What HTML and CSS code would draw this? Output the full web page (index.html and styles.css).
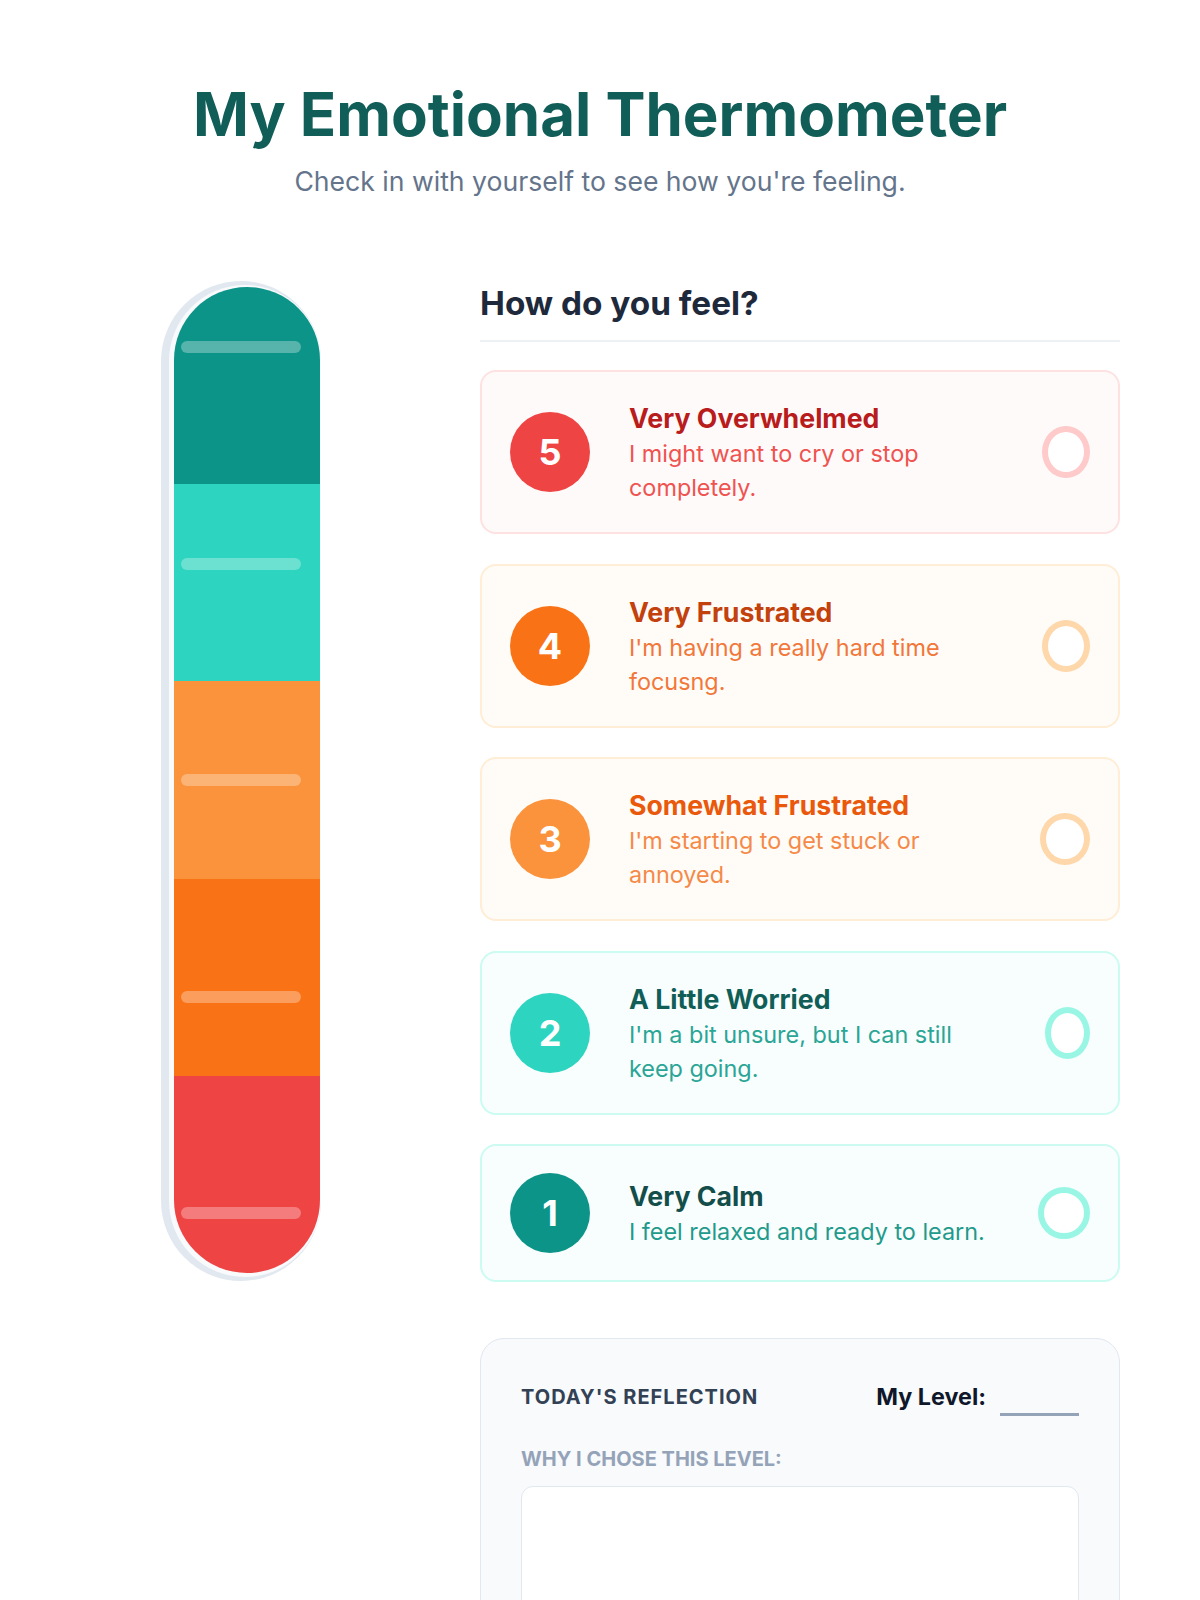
FILE: index.html
```html
<!DOCTYPE html>
<html lang="en">
<head>
<meta charset="utf-8">
<title>My Emotional Thermometer</title>
<link rel="stylesheet" href="styles.css">
</head>
<body>
<div class="page">
  <header class="header">
    <h1 class="title">My Emotional Thermometer</h1>
    <p class="subtitle">Check in with yourself to see how you're feeling.</p>
  </header>

  <div class="layout">
    <div class="thermo-col">
      <div class="tube">
        <div class="glass">
          <div class="fill">
            <div class="seg seg-5"></div>
            <div class="seg seg-4"></div>
            <div class="seg seg-3"></div>
            <div class="seg seg-2"></div>
            <div class="seg seg-1"></div>
          </div>
        </div>
        <div class="ticks">
          <span class="tick"></span>
          <span class="tick"></span>
          <span class="tick"></span>
          <span class="tick"></span>
          <span class="tick"></span>
        </div>
      </div>
    </div>

    <div class="feel-col">
      <h2 class="feel-heading">How do you feel?</h2>
      <div class="cards">
        <div class="card card-red">
          <div class="badge">5</div>
          <div class="card-text">
            <div class="card-title">Very Overwhelmed</div>
            <div class="card-desc">I might want to cry or stop completely.</div>
          </div>
          <div class="ring"></div>
        </div>
        <div class="card card-orange">
          <div class="badge">4</div>
          <div class="card-text">
            <div class="card-title">Very Frustrated</div>
            <div class="card-desc">I'm having a really hard time focusng.</div>
          </div>
          <div class="ring"></div>
        </div>
        <div class="card card-amber">
          <div class="badge">3</div>
          <div class="card-text">
            <div class="card-title">Somewhat Frustrated</div>
            <div class="card-desc">I'm starting to get stuck or annoyed.</div>
          </div>
          <div class="ring"></div>
        </div>
        <div class="card card-mint">
          <div class="badge">2</div>
          <div class="card-text">
            <div class="card-title">A Little Worried</div>
            <div class="card-desc">I'm a bit unsure, but I can still keep going.</div>
          </div>
          <div class="ring"></div>
        </div>
        <div class="card card-teal">
          <div class="badge">1</div>
          <div class="card-text">
            <div class="card-title">Very Calm</div>
            <div class="card-desc">I feel relaxed and ready to learn.</div>
          </div>
          <div class="ring"></div>
        </div>
      </div>

      <section class="reflection">
        <div class="refl-head">
          <div class="refl-title">Today's Reflection</div>
          <div class="level">
            <span class="level-label">My Level:</span>
            <span class="blank"></span>
          </div>
        </div>
        <div class="why">Why I chose this level:</div>
        <div class="answer"></div>
      </section>
    </div>
  </div>
</div>
</body>
</html>
```

FILE: styles.css
```css
* { box-sizing: border-box; }

body {
  margin: 0;
  background: #ffffff;
  font-family: Inter, "Noto Sans", "DejaVu Sans", sans-serif;
  color: #1e293b;
}

.page {
  width: 1040px;
  margin: 0 auto;
  padding-top: 78px;
}

.header { text-align: center; }

.title {
  margin: 0;
  font-size: 60px;
  line-height: 72px;
  font-weight: 700;
  color: #115e59;
}

.subtitle {
  margin: 15px 0 0;
  font-size: 26.6px;
  line-height: 32px;
  color: #64748b;
}

.layout {
  margin-top: 84px;
  display: grid;
  grid-template-columns: 1fr 2fr;
  column-gap: 80px;
  align-items: start;
}

/* Thermometer */
.thermo-col {
  display: flex;
  justify-content: center;
  padding-left: 2px;
}

.tube {
  position: relative;
  width: 160px;
  height: 1000px;
  border-radius: 80px;
  background: #e2e8f0;
  padding: 4px 0 4px 8px;
}

.glass {
  height: 100%;
  border-radius: 80px;
  background: #f8fafc;
  padding: 2px 1px 4px 5px;
}

.fill {
  height: 100%;
  border-radius: 74px;
  overflow: hidden;
  display: flex;
  flex-direction: column;
}

.seg { flex: 1; }
.seg-5 { background: #0d9488; }
.seg-4 { background: #2dd4bf; }
.seg-3 { background: #fb923c; }
.seg-2 { background: #f97316; }
.seg-1 { background: #ef4444; }

.ticks {
  position: absolute;
  inset: 0;
  padding: 60px 0 62px;
  display: flex;
  flex-direction: column;
  justify-content: space-between;
  align-items: center;
}

.tick {
  display: block;
  width: 120px;
  height: 12px;
  border-radius: 6px;
  background: rgba(255, 255, 255, 0.3);
}

/* Feelings */
.feel-heading {
  margin: 0;
  font-size: 33.3px;
  line-height: 44px;
  font-weight: 700;
  color: #1e293b;
  padding-bottom: 15px;
  border-bottom: 2px solid #eef1f4;
}

.cards {
  margin-top: 28px;
  display: flex;
  flex-direction: column;
  gap: 29.5px;
}

.card {
  display: flex;
  align-items: center;
  padding: 27px 28px;
  border: 2px solid;
  border-radius: 16px;
}

.badge {
  flex-shrink: 0;
  width: 80px;
  height: 80px;
  border-radius: 50%;
  margin-right: 39px;
  display: flex;
  align-items: center;
  justify-content: center;
  color: #ffffff;
  font-size: 36px;
  font-weight: 700;
}

.card-text {
  margin-right: 36px;
}

.card-title {
  font-size: 26.7px;
  line-height: 38px;
  font-weight: 700;
}

.card-desc {
  font-size: 23.4px;
  line-height: 34px;
}

.ring {
  margin-left: auto;
  width: 52px;
  height: 52px;
  border-radius: 50%;
  border: 6px solid;
  background: #ffffff;
}

.card-red { background: #fffafa; border-color: #fee2e2; }
.card-red .badge { background: #ef4444; }
.card-red .card-title { color: #b91c1c; }
.card-red .card-desc { color: #ef5350; }
.card-red .ring { border-color: #fecaca; }

.card-orange { background: #fffcf8; border-color: #ffedd5; }
.card-orange .badge { background: #f97316; }
.card-orange .card-title { color: #c2410c; }
.card-orange .card-desc { color: #f2773a; }
.card-orange .ring { border-color: #fed7aa; }

.card-amber { background: #fffcf8; border-color: #ffedd5; }
.card-amber .badge { background: #fb923c; }
.card-amber .card-title { color: #ea580c; }
.card-amber .card-desc { color: #f58a48; }
.card-amber .ring { border-color: #fed7aa; }

.card-mint { background: #f8fefd; border-color: #ccfbf1; }
.card-mint .badge { background: #2dd4bf; }
.card-mint .card-title { color: #115e59; }
.card-mint .card-desc { color: #2aa596; }
.card-mint .ring { border-color: #99f6e4; }

.card-teal { background: #f8fefd; border-color: #ccfbf1; }
.card-teal .badge { background: #0d9488; }
.card-teal .card-title { color: #134e4a; }
.card-teal .card-desc { color: #1f9a8c; }
.card-teal .ring { border-color: #99f6e4; }

/* Reflection */
.reflection {
  margin-top: 56px;
  background: #f8fafc;
  border: 1px solid #e2e8f0;
  border-radius: 24px;
  padding: 40px 40px 40px;
}

.refl-head {
  display: flex;
  justify-content: space-between;
  align-items: center;
}

.refl-title {
  font-size: 20px;
  line-height: 36px;
  font-weight: 700;
  text-transform: uppercase;
  letter-spacing: 0.05em;
  color: #334155;
}

.level {
  display: flex;
  align-items: flex-end;
  gap: 14px;
  height: 36px;
}

.level-label {
  font-size: 23.3px;
  line-height: 36px;
  font-weight: 700;
  color: #0f172a;
}

.blank {
  display: block;
  width: 79px;
  height: 0;
  border-bottom: 3px solid #94a3b8;
  margin-bottom: -1px;
}

.why {
  margin-top: 30px;
  font-size: 20px;
  line-height: 28px;
  font-weight: 700;
  text-transform: uppercase;
  color: #94a3b8;
}

.answer {
  margin-top: 13px;
  height: 200px;
  background: #ffffff;
  border: 1px solid #e2e8f0;
  border-radius: 12px;
}
```
